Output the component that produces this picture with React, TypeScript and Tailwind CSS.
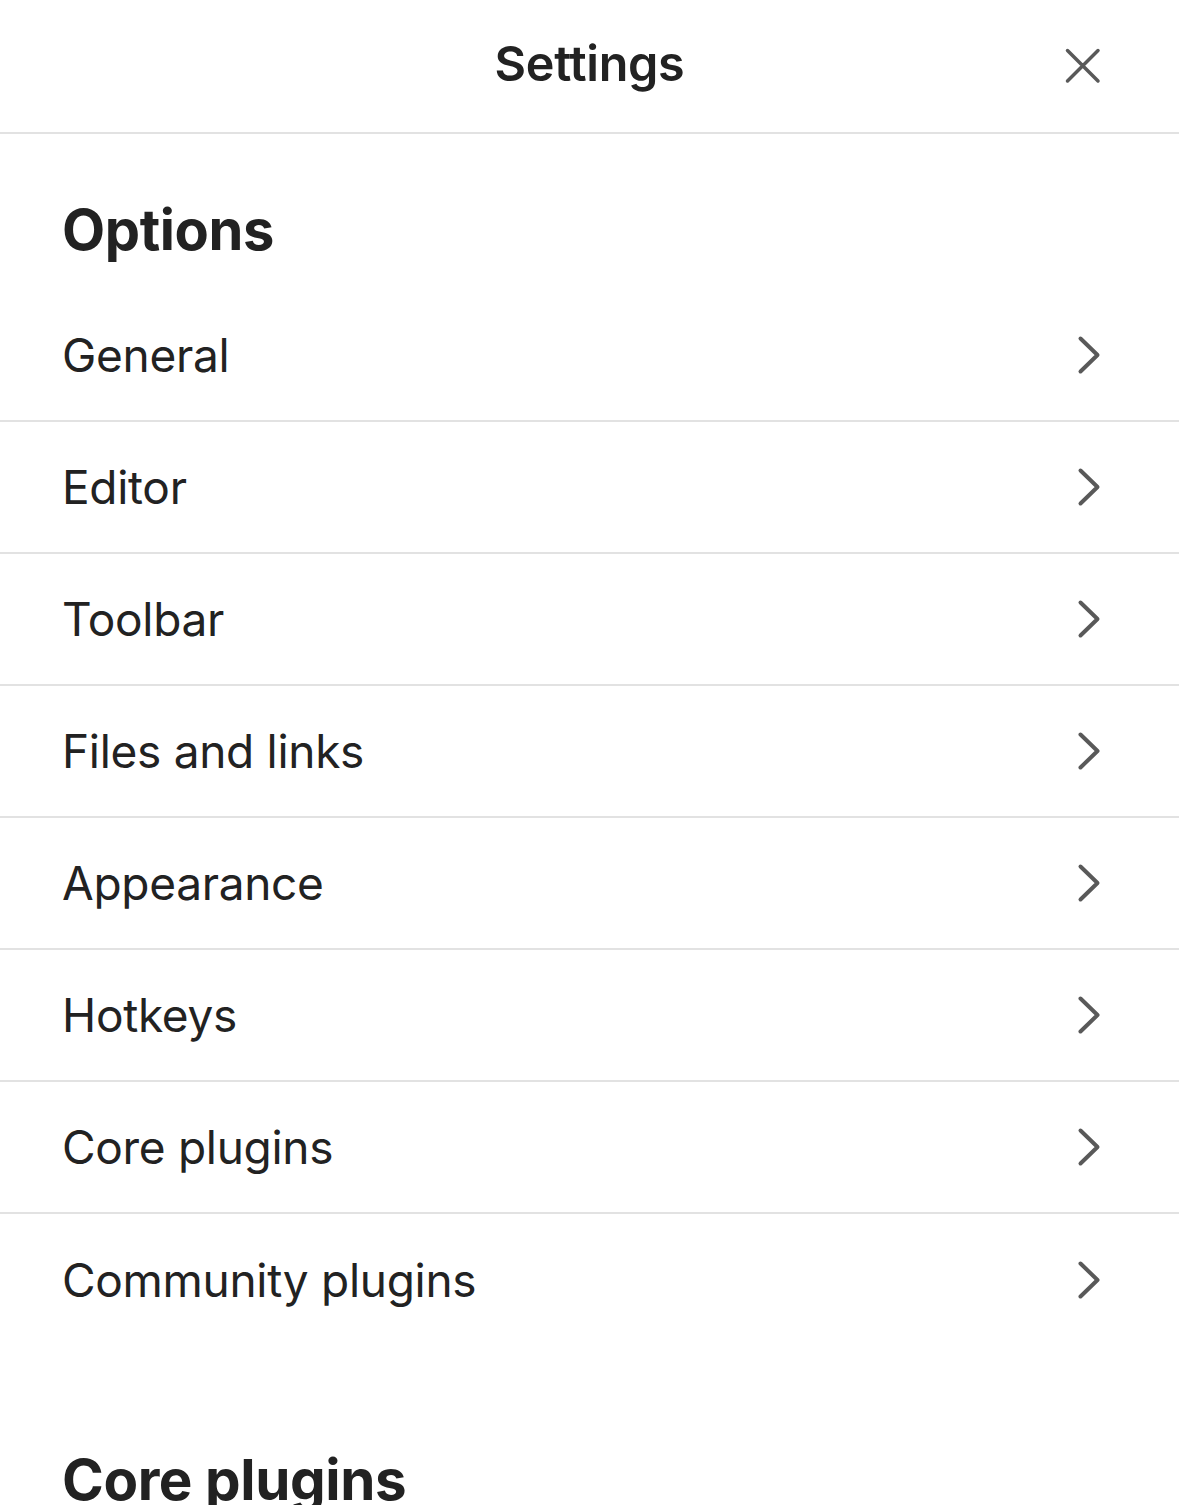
import React from "react";

const items = [
  "General",
  "Editor",
  "Toolbar",
  "Files and links",
  "Appearance",
  "Hotkeys",
  "Core plugins",
  "Community plugins",
];

function Chevron() {
  return (
    <svg width="24" height="40" viewBox="0 0 24 40" fill="none" className="shrink-0">
      <polyline
        points="3.5,3.5 20.5,20 3.5,36.5"
        stroke="#595959"
        strokeWidth="4"
        strokeLinecap="round"
        strokeLinejoin="round"
      />
    </svg>
  );
}

export default function App() {
  return (
    <div
      className="w-[1179px] h-[1505px] overflow-hidden bg-white text-[#222222]"
      style={{ fontFamily: "Inter, 'Noto Sans', sans-serif" }}
    >
      <div className="relative flex h-[134px] items-center justify-center border-b-2 border-[#e2e2e2]">
        <div className="text-[48.5px] font-semibold tracking-[-0.3px] text-[#222222] -mt-1">Settings</div>
        <svg
          width="40"
          height="40"
          viewBox="0 0 40 40"
          className="absolute right-[76px] top-[46px]"
          fill="none"
        >
          <path d="M4.5 4.5 L35 35 M35 4.5 L4.5 35" stroke="#595959" strokeWidth="3.5" strokeLinecap="round" />
        </svg>
      </div>

      <div className="pt-[63px]">
        <div className="pl-[62px] text-[56px] font-bold leading-[67px] tracking-[-0.4px]">Options</div>
        <div className="mt-[26px]">
          {items.map((label, i) => (
            <div
              key={label}
              className={
                "flex h-[132px] items-center justify-between pl-[62px] pr-[78px] " +
                (i < items.length - 1 ? "border-b-2 border-[#e2e2e2]" : "")
              }
            >
              <span className="text-[46px] font-normal tracking-[-0.3px] text-[#222222]">{label}</span>
              <Chevron />
            </div>
          ))}
        </div>
      </div>

      <div className="pt-[100px]">
        <div className="pl-[62px] text-[56.5px] font-bold leading-[67px] tracking-[-0.4px]">Core plugins</div>
      </div>
    </div>
  );
}
